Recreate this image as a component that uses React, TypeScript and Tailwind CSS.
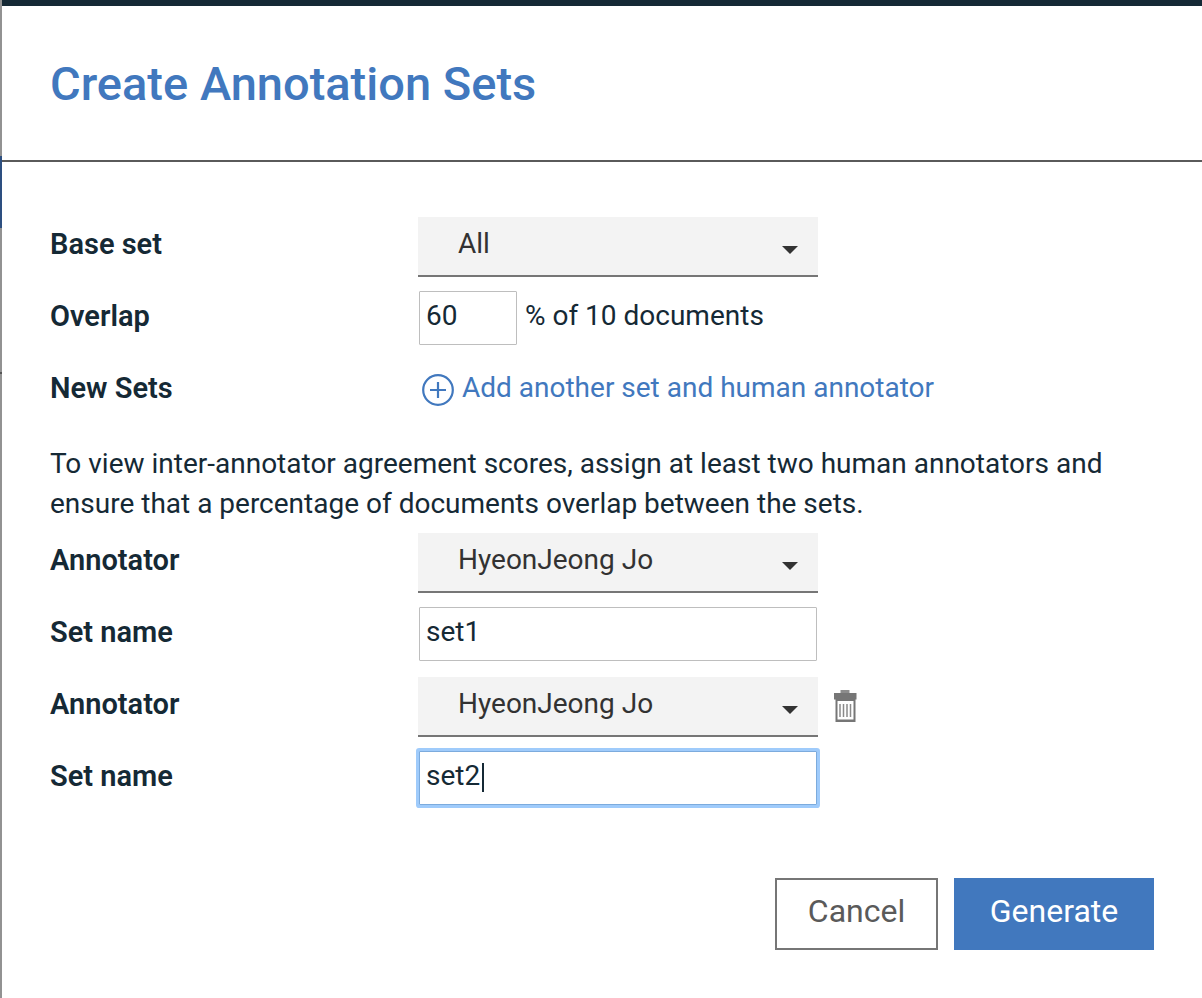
import { useState } from "react";
import type { ReactNode } from "react";

function Row({ label, htmlFor, children }: { label: string; htmlFor: string; children: ReactNode }) {
  return (
    <div className="flex h-[60px] items-center">
      <label htmlFor={htmlFor} className="w-[368px] shrink-0 pb-1 text-[29px] font-semibold">
        {label}
      </label>
      <div className="flex items-center gap-2">{children}</div>
    </div>
  );
}

function Dropdown({ id, options }: { id: string; options: string[] }) {
  return (
    <div className="relative">
      <select
        id={id}
        className="block h-[60px] w-[400px] appearance-none rounded-none border-b-2 border-[#767676] bg-[#f3f3f3] pr-14 pb-1 pl-10 text-[#323232] outline-none"
      >
        {options.map((o) => (
          <option key={o}>{o}</option>
        ))}
      </select>
      <svg viewBox="0 0 16 8" className="pointer-events-none absolute top-[29px] right-5 h-2 w-4" aria-hidden="true">
        <path d="M0 0h16L8 8z" fill="#323232" />
      </svg>
    </div>
  );
}

const field =
  "mb-0.5 ml-px h-[54px] rounded-[1px] border border-[#bebebe] bg-white px-1.5 pb-1.5 outline-none focus:border-[#7cabdd] focus:ring-3 focus:ring-[#9fcbfb]";

export default function App() {
  const [overlap, setOverlap] = useState("60");
  const [first, setFirst] = useState("set1");
  const [second, setSecond] = useState("set2");
  const [edited, setEdited] = useState(false);

  return (
    <div className="flex min-h-screen bg-white font-['Roboto',sans-serif] text-[28px] text-[#152935]">
      <div className="flex w-0.5 shrink-0 flex-col bg-[#929292]" aria-hidden="true">
        <div className="h-[156px]" />
        <div className="h-[72px] bg-[#2d4f80]" />
        <div className="h-36" />
        <div className="h-0.5 bg-[#555]" />
      </div>
      <main className="min-w-0 flex-1 border-t-[6px] border-[#152935]">
        <header className="border-b-2 border-[#5a5a5a] px-12 pt-12 pb-[46px]">
          <h1 className="text-[47px] leading-[60px] font-medium text-[#4178be]">Create Annotation Sets</h1>
        </header>
        <form className="px-12 pt-[55px] pb-12" onSubmit={(e) => e.preventDefault()}>
          <div className="flex flex-col gap-3">
            <Row label="Base set" htmlFor="base">
              <Dropdown id="base" options={["All"]} />
            </Row>
            <Row label="Overlap" htmlFor="overlap">
              <input id="overlap" className={`${field} w-[98px]`} value={overlap} onChange={(e) => setOverlap(e.target.value)} />
              <span className="pb-1.5">% of 10 documents</span>
            </Row>
            <Row label="New Sets" htmlFor="add">
              <button id="add" type="button" className="flex items-center gap-2 pl-1 text-[#4178be]">
                <svg viewBox="0 0 32 32" className="mb-0.5 h-8 w-8" fill="none" stroke="currentColor" strokeWidth="2.200" aria-hidden="true">
                  <circle cx="16" cy="16" r="14.800" />
                  <path d="M16 8v16M8 16h16" />
                </svg>
                <span className="pb-1.5">Add another set and human annotator</span>
              </button>
            </Row>
          </div>
          <p className="mt-[23px] mb-[9px] leading-10">
            To view inter-annotator agreement scores, assign at least two human annotators and ensure that a percentage of
            documents overlap between the sets.
          </p>
          <div className="flex flex-col gap-3">
            <Row label="Annotator" htmlFor="annotator1">
              <Dropdown id="annotator1" options={["HyeonJeong Jo"]} />
            </Row>
            <Row label="Set name" htmlFor="set1">
              <input id="set1" className={`${field} w-[398px]`} value={first} onChange={(e) => setFirst(e.target.value)} />
            </Row>
            <Row label="Annotator" htmlFor="annotator2">
              <Dropdown id="annotator2" options={["HyeonJeong Jo"]} />
              <button type="button" aria-label="Delete set" className="mb-0.5 ml-2">
                <svg viewBox="0 0 24 32" className="h-8 w-6" aria-hidden="true">
                  <path d="M6.500 0h9v3h-9z" fill="#8c8c8c" />
                  <path d="M0 3h22.500v6.500h-1V32h-20V9.500H0z" fill="#767676" />
                  <path d="M3.500 11h16v18.500h-16z" fill="#fff" />
                  <path d="M6 14v13M9.500 14v13M13 14v13M16.500 14v13" stroke="#8a8a8a" strokeWidth="1.5" />
                </svg>
              </button>
            </Row>
            <Row label="Set name" htmlFor="set2">
              <div className="relative flex">
                <input
                  id="set2"
                  autoFocus
                  className={`${field} w-[398px]`}
                  value={second}
                  onChange={(e) => {
                    setSecond(e.target.value);
                    setEdited(true);
                  }}
                />
                {!edited && <span className="pointer-events-none absolute top-3 left-16 h-[29px] w-0.5 bg-[#152935]" />}
              </div>
            </Row>
          </div>
          <div className="mt-[69px] flex justify-end gap-4 text-[32px]">
            <button type="button" className="h-[72px] w-[163px] border-2 border-[#767676] pb-1.5 text-[#5a5a5a]">
              Cancel
            </button>
            <button type="submit" className="h-[72px] w-[200px] bg-[#4178be] pb-1.5 text-white">
              Generate
            </button>
          </div>
        </form>
      </main>
    </div>
  );
}
